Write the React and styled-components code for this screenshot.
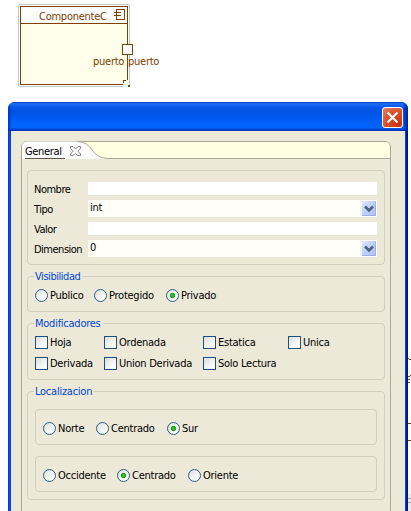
import React from "react";
import styled, { createGlobalStyle } from "styled-components";

const Global = createGlobalStyle`
  *, *::before, *::after { box-sizing: border-box; }
  body { margin: 0; background: #fff; }
`;

const Screen = styled.main`
  position: relative;
  width: 411px;
  height: 511px;
  overflow: hidden;
  background: #fff;
  color: #000;
  font: 11px/14px "DejaVu Sans Condensed", "DejaVu Sans", sans-serif;
  font-stretch: condensed;
  letter-spacing: -0.25px;
  white-space: nowrap;
`;

/* Diagram */
const Canvas = styled.section`
  position: relative;
  height: 102px;
  color: #804000;
`;

const Node = styled.div`
  position: absolute;
  left: 18px;
  top: 4px;
  width: 112px;
  height: 83px;
  padding: 1px;
  border: 1px solid #c6c6c6;
  border-radius: 2px;
`;

const NodeBody = styled.div`
  height: 79px;
  width: 108px;
  border: 1px solid #804000;
  background: #ffffec;
`;

const NodeHeader = styled.header`
  display: flex;
  justify-content: space-between;
  height: 17px;
  padding: 2px 1px 0 18px;
  border-bottom: 1px solid #804000;
  background: #fff;
  line-height: 15px;
`;

const Port = styled.div`
  position: absolute;
  left: 122px;
  top: 44px;
  width: 11px;
  height: 11px;
  border: 1px solid #804000;
  background: #fff;
`;

const PortLabel = styled.span`
  position: absolute;
  left: ${(p) => p.$x}px;
  top: 55px;
`;

const Grip = styled.svg`
  position: absolute;
  left: 122px;
  top: 79px;
`;

const Backdrop = styled.svg`
  position: absolute;
  left: 408px;
  top: 350px;
`;

/* Window */
const Window = styled.section`
  width: 400px;
  height: 409px;
  margin-left: 8px;
  overflow: hidden;
  border-radius: 7px 7px 0 0;
  background: linear-gradient(90deg, #0831d9 0 1px, #0855ec 1px 2px, #0040dc 2px 397px, #0046e8 397px 398px, #0018a8 398px 399px, #00138c 399px);
`;

const TitleBar = styled.header`
  display: flex;
  justify-content: flex-end;
  height: 29px;
  padding: 5px 5px 0 0;
  background: linear-gradient(180deg, #0a3fc8 0, #2b83ff 1px, #1467f2 3px, #0456e4 6px, #0054e3 11px, #005bf2 17px, #0066ff 24px, #0060fa 26px, #0042cc 28px, #0035b8 29px);
  box-shadow: inset 2px 0 2px #0036c8, inset -3px 0 3px #0024a8;
`;

const CloseButton = styled.button`
  width: 21px;
  height: 21px;
  padding: 0;
  border: 1px solid #fff;
  border-radius: 3px;
  background: radial-gradient(circle at 85% 90%, #c83008 0, #da4c28 55%, #e88468 100%);
  svg { display: block; }
`;

const Client = styled.div`
  height: 380px;
  margin: 0 3px;
  padding: 10px 14px 0 10px;
  background: #ece9d8;
`;

const Folder = styled.div`
  width: 370px;
  height: 380px;
  border: 1px solid #aca899;
  border-radius: 6px 6px 0 0;
`;

const TabStrip = styled.div`
  position: relative;
  display: flex;
  height: 17px;
  border-radius: 5px 5px 0 0;
  border-bottom: 1px solid #aca899;
  background: #ffffe1;
`;

const TabShape = styled.svg`
  position: absolute;
  left: 0;
  top: -1px;
`;

const TabTitle = styled.span`
  position: relative;
  width: 40px;
  height: 17px;
  margin-left: 3px;
  padding-top: 3px;
  line-height: 13px;
  letter-spacing: -0.35px;
  border-bottom: 1px solid #5a584e;
`;

const TabClose = styled.svg`
  position: relative;
  margin: 4px 0 0 5px;
`;

const Page = styled.div`
  padding: 11px 5px 0;
`;

const Group = styled.section`
  position: relative;
  height: ${(p) => p.$h}px;
  margin-bottom: ${(p) => p.$gap || 0}px;
  padding: ${(p) => p.$pad};
  border: 1px solid #d0d0bf;
  border-radius: 4px;
`;

const GroupTitle = styled.h2`
  position: absolute;
  left: 6px;
  top: -7px;
  margin: 0;
  padding: 0 2px 0 1px;
  background: #ece9d8;
  color: #0046d5;
  font-size: inherit;
  font-weight: normal;
  letter-spacing: ${(p) => p.$tracking || -0.25}px;
`;

const Form = styled.div`
  display: grid;
  grid-template-columns: 53px 289px;
  grid-template-rows: repeat(4, 20px);
  align-items: center;
`;

const Label = styled.label`
  margin-left: -1px;
  padding-top: 2px;
  letter-spacing: -0.5px;
`;

const TextField = styled.div`
  height: 13px;
  margin-bottom: 1px;
  background: #fff;
`;

const Combo = styled.div`
  display: flex;
  justify-content: space-between;
  height: 17px;
  margin-bottom: 1px;
  padding-left: 2px;
  background: #fffff8;
  line-height: 15px;
`;

const DropButton = styled.button`
  width: 17px;
  height: 17px;
  padding: 0;
  border: 1px solid #fff;
  border-left: 2px solid #f4f4ee;
  border-radius: 2px;
  background: linear-gradient(135deg, #dce6fe, #bacdfb 60%, #a9c2f8);
  box-shadow: inset -1px -1px #9cb4de;
  svg { display: block; }
`;

const OptionRow = styled.div`
  display: grid;
  grid-template-columns: ${(p) => p.$cols};
  grid-auto-rows: 21px;
  align-items: center;
`;

const Option = styled.label`
  display: flex;
  align-items: center;
  gap: 2px;
  height: 15px;
`;

const Radio = styled.i`
  flex: none;
  width: 13px;
  height: 13px;
  border: 1px solid #2b608a;
  border-radius: 50%;
  background: ${(p) => (p.$on ? "radial-gradient(circle, #38c838 0, #21a121 2.3px, transparent 3.1px), " : "")}
    linear-gradient(135deg, #dcdcd7, #fff 80%);
`;

const Checkbox = styled.i`
  flex: none;
  width: 13px;
  height: 13px;
  border: 1px solid #1c5180;
  background: linear-gradient(135deg, #dcdcd7, #fff 80%);
`;

const Caption = styled.span`
  line-height: 14px;
  padding-top: 1px;
`;

const Radios = ({ cols, items, selected }) => (
  <OptionRow $cols={cols}>
    {items.map((t) => (
      <Option key={t}>
        <Radio $on={t === selected} />
        <Caption>{t}</Caption>
      </Option>
    ))}
  </OptionRow>
);

const ComboBox = ({ value }) => (
  <Combo>
    <span>{value}</span>
    <DropButton aria-label="Abrir">
      <svg width="14" height="15" viewBox="0 0 14 15">
        <path d="M3 5.500 7 9.500 11 5.500" fill="none" stroke="#4d6185" strokeWidth="2.600" />
      </svg>
    </DropButton>
  </Combo>
);

const modifiers = ["Hoja", "Ordenada", "Estatica", "Unica", "Derivada", "Union Derivada", "Solo Lectura"];

export default function App() {
  return (
    <Screen>
      <Global />
      <Canvas>
        <Node>
          <NodeBody>
            <NodeHeader>
              <span>ComponenteC</span>
              <svg width="12" height="12" fill="none" stroke="#804000" shapeRendering="crispEdges">
                <path d="M2.500 3V.500H10.500V10.500H2.500V7M0 3.500H7M2.500 3V7M0 6.500H7" />
              </svg>
            </NodeHeader>
          </NodeBody>
        </Node>
        <Port />
        <PortLabel $x={93}>puerto</PortLabel>
        <PortLabel $x={128}>puerto</PortLabel>
        <Grip width="9" height="9" shapeRendering="crispEdges">
          <path d="M1 1H6V8H1Z" fill="#fff" />
          <path d="M1.500 4V1.500H4" fill="none" stroke="#804000" />
          <path d="M6 6H8V8H6Z" fill="#804000" />
        </Grip>
      </Canvas>

      <Window>
        <TitleBar>
          <CloseButton aria-label="Cerrar">
            <svg width="19" height="19">
              <path d="M4.500 4.500 14.500 14.500M14.500 4.500 4.500 14.500" stroke="#fff" strokeWidth="2.200" />
            </svg>
          </CloseButton>
        </TitleBar>
        <Client>
          <Folder>
            <TabStrip>
              <TabShape width="90" height="18">
                <path d="M0 18V5Q1 1 5 .500H55C72 .500 68 17.500 86 17.500V18Z" fill="#fff" />
                <path d="M55 .500C72 .500 68 17.500 86 17.500" fill="none" stroke="#aca899" />
              </TabShape>
              <TabTitle>General</TabTitle>
              <TabClose width="11" height="11" viewBox="0 0 11 11">
                <path d="M.500.500H3L5.500 3 8 .500H10.500V2.500L8 5.200 10.500 8V9.500H8L5.500 7.500 3 9.500H.500V8L3 5.200.500 2.500Z" fill="#fff" stroke="#777" strokeWidth=".9" />
              </TabClose>
            </TabStrip>
            <Page>
              <Group $h={95} $gap={11} $pad="8px 7px">
                <Form>
                  <Label>Nombre</Label>
                  <TextField />
                  <Label>Tipo</Label>
                  <ComboBox value="int" />
                  <Label>Valor</Label>
                  <TextField />
                  <Label>Dimension</Label>
                  <ComboBox value="0" />
                </Form>
              </Group>
              <Group $h={36} $gap={11} $pad="8px 7px">
                <GroupTitle $tracking={-0.45}>Visibilidad</GroupTitle>
                <Radios cols="59px 72px 90px" items={["Publico", "Protegido", "Privado"]} selected="Privado" />
              </Group>
              <Group $h={57} $gap={11} $pad="8px 7px">
                <GroupTitle>Modificadores</GroupTitle>
                <OptionRow $cols="69px 99px 85px 60px">
                  {modifiers.map((t) => (
                    <Option key={t}>
                      <Checkbox />
                      <Caption>{t}</Caption>
                    </Option>
                  ))}
                </OptionRow>
              </Group>
              <Group $h={109} $pad="17px 7px">
                <GroupTitle>Localizacion</GroupTitle>
                <Group $h={36} $gap={11} $pad="8px 7px">
                  <Radios cols="53px 71px 70px" items={["Norte", "Centrado", "Sur"]} selected="Sur" />
                </Group>
                <Group $h={36} $pad="8px 7px">
                  <Radios cols="74px 71px 70px" items={["Occidente", "Centrado", "Oriente"]} selected="Centrado" />
                </Group>
              </Group>
            </Page>
          </Folder>
        </Client>
      </Window>

      <Backdrop width="3" height="161" shapeRendering="crispEdges">
        <path d="M0 130H3V144H0Z" fill="#f4f2f5" />
        <path d="M0 144H3V161H0Z" fill="#ece9e4" />
        <path d="M0 8.500H1M1 9.500H3M0 26.500H2M2 25.500H3M0 29.500H2M0 32.500H2M0 73.500H3M0 90.500H3" stroke="#804000" />
        <path d="M0 148.500H3M0 152.500H3" stroke="#aca899" />
      </Backdrop>
    </Screen>
  );
}
